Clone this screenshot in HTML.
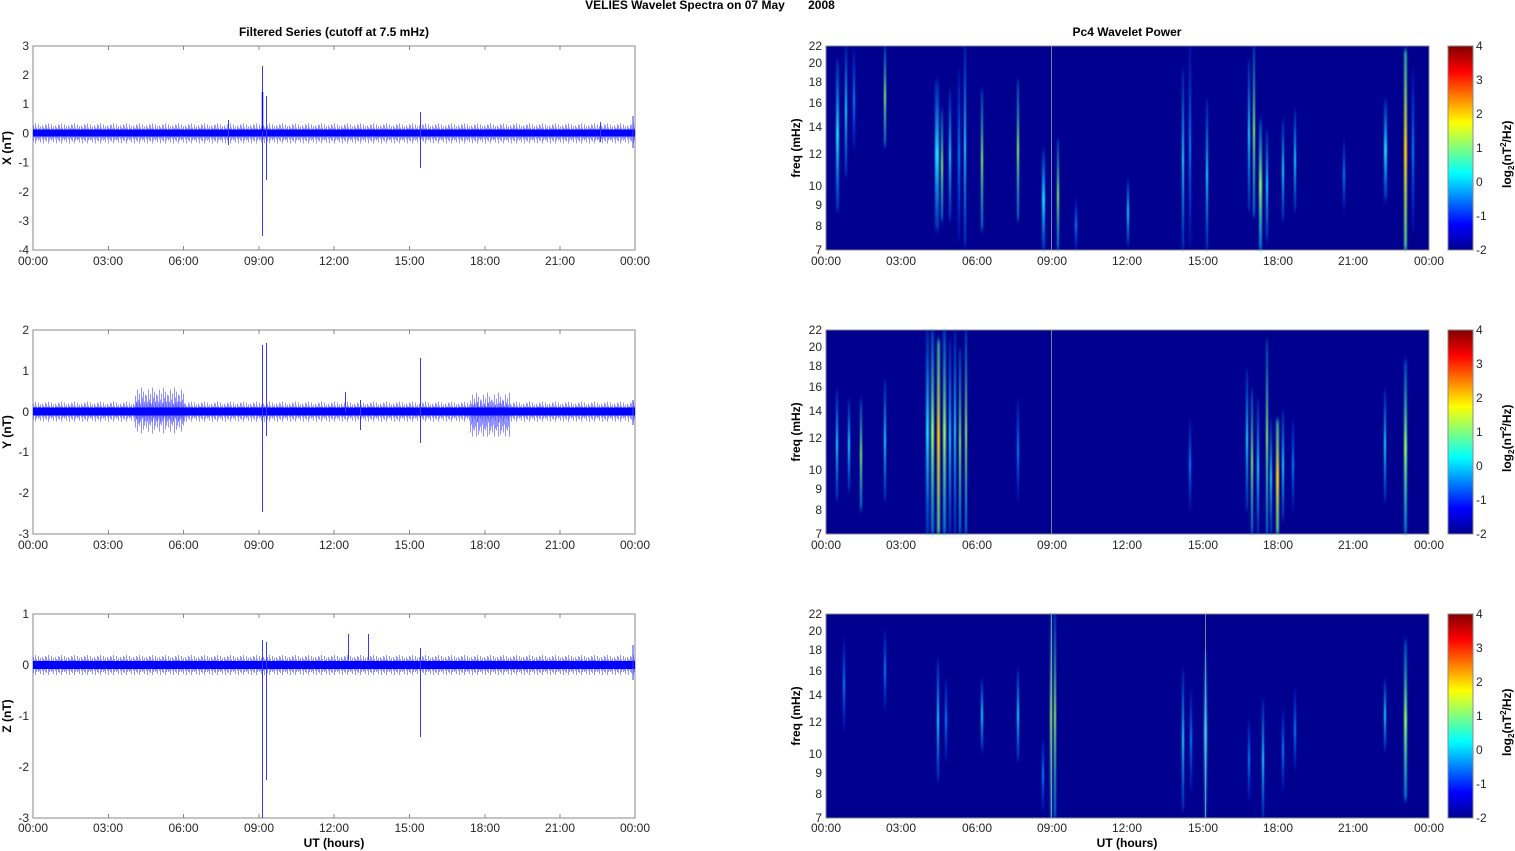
<!DOCTYPE html>
<html><head><meta charset="utf-8"><style>
html,body{margin:0;padding:0;background:#fff;}
svg{display:block;font-family:"Liberation Sans",Arial,sans-serif;}
.t{font-size:12px;fill:#262626;}
.b{font-size:12px;font-weight:bold;fill:#000;}
</style></head><body>
<svg width="1515" height="851" viewBox="0 0 1515 851" xmlns="http://www.w3.org/2000/svg">
<defs>
<pattern id="n" width="13" height="40" patternUnits="userSpaceOnUse">
<path d="M0.5 12V28M1.5 15V24M2.5 10V30M3.5 14V27M4.5 16V25M5.5 11V27M6.5 15V26M7.5 13V29M8.5 16V24M9.5 12V26M10.5 14V30M11.5 15V25M12.5 11V27" stroke="#4a4aff" stroke-width="1" opacity="0.6"/>
</pattern>
<pattern id="nw" width="11" height="60" patternUnits="userSpaceOnUse">
<path d="M0.5 14V46M1.5 20V38M2.5 8V50M3.5 18V42M4.5 12V44M5.5 22V40M6.5 6V52M7.5 16V36M8.5 10V48M9.5 20V44M10.5 13V40" stroke="#4a4aff" stroke-width="1" opacity="0.6"/>
</pattern>
<linearGradient id="jet" x1="0" y1="1" x2="0" y2="0">
<stop offset="0" stop-color="#00008f"/><stop offset="0.125" stop-color="#0000ff"/>
<stop offset="0.375" stop-color="#00ffff"/><stop offset="0.625" stop-color="#ffff00"/>
<stop offset="0.875" stop-color="#ff0000"/><stop offset="1" stop-color="#800000"/>
</linearGradient>
<linearGradient id="c" x1="0" y1="0" x2="0" y2="1"><stop offset="0" stop-color="#00a0ff" stop-opacity="0.2"/><stop offset="0.5" stop-color="#20e0ff"/><stop offset="1" stop-color="#00a0ff" stop-opacity="0.3"/></linearGradient>
<linearGradient id="g" x1="0" y1="0" x2="0" y2="1"><stop offset="0" stop-color="#00c0ff" stop-opacity="0.3"/><stop offset="0.5" stop-color="#90ff60"/><stop offset="1" stop-color="#00d0ff" stop-opacity="0.5"/></linearGradient>
<linearGradient id="y" x1="0" y1="0" x2="0" y2="1"><stop offset="0" stop-color="#40ffb0" stop-opacity="0.6"/><stop offset="0.5" stop-color="#ffd000"/><stop offset="1" stop-color="#60ff90" stop-opacity="0.7"/></linearGradient>
<linearGradient id="d" x1="0" y1="0" x2="0" y2="1"><stop offset="0" stop-color="#0050ff" stop-opacity="0.2"/><stop offset="0.5" stop-color="#0090ff"/><stop offset="1" stop-color="#0050ff" stop-opacity="0.2"/></linearGradient>
<filter id="bl" x="-2" y="0" width="5" height="1"><feGaussianBlur stdDeviation="0.7 3"/></filter>
</defs>

<text x="710" y="9" class="b" text-anchor="middle">VELIES Wavelet Spectra on 07 May&#160;&#160;&#160;&#160;&#160;&#160;&#160;2008</text>
<text x="334" y="36" class="b" text-anchor="middle">Filtered Series (cutoff at 7.5 mHz)</text>
<text x="1127" y="36" class="b" text-anchor="middle">Pc4 Wavelet Power</text>

<g>
<rect x="33" y="46" width="602" height="204" fill="#fff" stroke="#888"/>
<g transform="translate(33,113.4)"><rect width="602" height="40" fill="url(#n)"/></g>
<rect x="33" y="129.5" width="602" height="7" fill="#0000ff"/>
<path d="M262.5 66V236M266.5 96V180M420.5 112V168M228.5 120V145M633 116V148M600.5 122V142" stroke="#3838ff" stroke-width="1"/>
<path d="M262.5 92V132" stroke="#0000ff" stroke-width="1.5"/>
</g>
<g>
<rect x="33" y="330" width="602" height="204" fill="#fff" stroke="#888"/>
<g transform="translate(33,391.6)"><rect width="602" height="40" fill="url(#n)"/></g>
<g transform="translate(135,381.6)"><rect width="50" height="60" fill="url(#nw)"/></g>
<g transform="translate(470,386.6)"><rect width="40" height="50" fill="url(#nw)"/></g>
<rect x="33" y="407.5" width="602" height="8" fill="#0000ff"/>
<path d="M262.5 345V512M266.5 343V436M420.5 358V443M360.5 400V430M345.5 392V412M633 400V425" stroke="#3838ff" stroke-width="1"/>
</g>
<g>
<rect x="33" y="614" width="602" height="204" fill="#fff" stroke="#888"/>
<g transform="translate(33,645)"><rect width="602" height="40" fill="url(#n)"/></g>
<rect x="33" y="661" width="602" height="8" fill="#0000ff"/>
<path d="M262.5 640V818M266.5 642V780M420.5 648V737M348.5 634V660M368.5 634V660M633 645V680" stroke="#3838ff" stroke-width="1"/>
</g>

<g class="t" text-anchor="middle">
<text x="33" y="265">00:00</text><text x="108" y="265">03:00</text><text x="183.5" y="265">06:00</text><text x="259" y="265">09:00</text><text x="334" y="265">12:00</text><text x="409.5" y="265">15:00</text><text x="485" y="265">18:00</text><text x="560" y="265">21:00</text><text x="635" y="265">00:00</text>
<text x="33" y="549">00:00</text><text x="108" y="549">03:00</text><text x="183.5" y="549">06:00</text><text x="259" y="549">09:00</text><text x="334" y="549">12:00</text><text x="409.5" y="549">15:00</text><text x="485" y="549">18:00</text><text x="560" y="549">21:00</text><text x="635" y="549">00:00</text>
<text x="33" y="832">00:00</text><text x="108" y="832">03:00</text><text x="183.5" y="832">06:00</text><text x="259" y="832">09:00</text><text x="334" y="832">12:00</text><text x="409.5" y="832">15:00</text><text x="485" y="832">18:00</text><text x="560" y="832">21:00</text><text x="635" y="832">00:00</text>
</g>
<g class="t" text-anchor="end">
<text x="29" y="50">3</text><text x="29" y="79">2</text><text x="29" y="108">1</text><text x="29" y="137.5">0</text><text x="29" y="166.5">-1</text><text x="29" y="196">-2</text><text x="29" y="225">-3</text><text x="29" y="254">-4</text>
<text x="29" y="334">2</text><text x="29" y="375">1</text><text x="29" y="416">0</text><text x="29" y="456">-1</text><text x="29" y="497">-2</text><text x="29" y="538">-3</text>
<text x="29" y="618">1</text><text x="29" y="669">0</text><text x="29" y="720">-1</text><text x="29" y="771">-2</text><text x="29" y="822">-3</text>
</g>
<path d="M108.5 46v4M183.5 46v4M259 46v4M334 46v4M409.5 46v4M485 46v4M560 46v4M108.5 250v-4M183.5 250v-4M259 250v-4M334 250v-4M409.5 250v-4M485 250v-4M560 250v-4
M108.5 330v4M183.5 330v4M259 330v4M334 330v4M409.5 330v4M485 330v4M560 330v4M108.5 534v-4M183.5 534v-4M259 534v-4M334 534v-4M409.5 534v-4M485 534v-4M560 534v-4
M108.5 614v4M183.5 614v4M259 614v4M334 614v4M409.5 614v4M485 614v4M560 614v4M108.5 818v-4M183.5 818v-4M259 818v-4M334 818v-4M409.5 818v-4M485 818v-4M560 818v-4" stroke="#888"/>
<text class="b" transform="translate(11,148) rotate(-90)" text-anchor="middle">X (nT)</text>
<text class="b" transform="translate(11,432) rotate(-90)" text-anchor="middle">Y (nT)</text>
<text class="b" transform="translate(11,716) rotate(-90)" text-anchor="middle">Z (nT)</text>
<text class="b" x="334" y="847" text-anchor="middle">UT (hours)</text>

<rect x="826" y="46" width="603" height="204" fill="#00008f"/>
<rect x="826" y="330" width="603" height="204" fill="#00008f"/>
<rect x="826" y="614" width="603" height="204" fill="#00008f"/>

<g filter="url(#bl)">
<rect x="836" y="60" width="3" height="150" fill="url(#c)"/>
<rect x="845" y="46" width="2" height="130" fill="url(#c)"/>
<rect x="853" y="50" width="2" height="100" fill="url(#d)"/>
<rect x="884" y="46" width="2" height="100" fill="url(#g)"/>
<rect x="935" y="80" width="4" height="150" fill="url(#c)"/>
<rect x="941" y="110" width="2" height="110" fill="url(#g)"/>
<rect x="949" y="90" width="2" height="130" fill="url(#c)"/>
<rect x="958" y="70" width="2" height="170" fill="url(#d)"/>
<rect x="964" y="46" width="2" height="200" fill="url(#c)"/>
<rect x="981" y="90" width="2" height="140" fill="url(#g)"/>
<rect x="1017" y="80" width="2" height="140" fill="url(#g)"/>
<rect x="1042" y="150" width="3" height="100" fill="url(#c)"/>
<rect x="1057" y="140" width="2" height="110" fill="url(#g)"/>
<rect x="1075" y="200" width="2" height="50" fill="url(#d)"/>
<rect x="1127" y="180" width="2" height="65" fill="url(#c)"/>
<rect x="1182" y="70" width="2" height="180" fill="url(#c)"/>
<rect x="1189" y="46" width="2" height="200" fill="url(#d)"/>
<rect x="1206" y="100" width="2" height="150" fill="url(#c)"/>
<rect x="1248" y="60" width="2" height="150" fill="url(#c)"/>
<rect x="1253" y="46" width="2" height="170" fill="url(#g)"/>
<rect x="1259" y="120" width="3" height="130" fill="url(#g)"/>
<rect x="1266" y="130" width="2" height="110" fill="url(#c)"/>
<rect x="1282" y="120" width="2" height="100" fill="url(#c)"/>
<rect x="1294" y="110" width="2" height="100" fill="url(#c)"/>
<rect x="1343" y="140" width="2" height="70" fill="url(#d)"/>
<rect x="1384" y="100" width="3" height="100" fill="url(#c)"/>
<rect x="1404" y="50" width="3" height="200" fill="url(#y)"/>
<rect x="1412" y="70" width="2" height="160" fill="url(#d)"/>
<rect x="836" y="390" width="2" height="110" fill="url(#c)"/>
<rect x="848" y="400" width="2" height="90" fill="url(#c)"/>
<rect x="860" y="400" width="2" height="110" fill="url(#g)"/>
<rect x="884" y="380" width="2" height="120" fill="url(#c)"/>
<rect x="926" y="330" width="3" height="204" fill="url(#c)"/>
<rect x="931" y="330" width="3" height="204" fill="url(#g)"/>
<rect x="937" y="340" width="3" height="194" fill="url(#y)"/>
<rect x="943" y="330" width="3" height="204" fill="url(#g)"/>
<rect x="949" y="340" width="2" height="194" fill="url(#c)"/>
<rect x="954" y="330" width="2" height="204" fill="url(#c)"/>
<rect x="959" y="350" width="2" height="184" fill="url(#g)"/>
<rect x="965" y="330" width="2" height="204" fill="url(#g)"/>
<rect x="1017" y="400" width="2" height="100" fill="url(#d)"/>
<rect x="1189" y="420" width="2" height="90" fill="url(#d)"/>
<rect x="1246" y="370" width="2" height="140" fill="url(#c)"/>
<rect x="1251" y="390" width="2" height="144" fill="url(#g)"/>
<rect x="1257" y="400" width="2" height="134" fill="url(#c)"/>
<rect x="1266" y="340" width="2" height="194" fill="url(#g)"/>
<rect x="1270" y="420" width="2" height="114" fill="url(#c)"/>
<rect x="1276" y="420" width="3" height="114" fill="url(#y)"/>
<rect x="1282" y="410" width="2" height="110" fill="url(#c)"/>
<rect x="1292" y="420" width="2" height="90" fill="url(#d)"/>
<rect x="1384" y="390" width="2" height="110" fill="url(#c)"/>
<rect x="1404" y="360" width="3" height="174" fill="url(#g)"/>
<rect x="843" y="640" width="2" height="90" fill="url(#d)"/>
<rect x="884" y="630" width="2" height="80" fill="url(#d)"/>
<rect x="937" y="660" width="2" height="120" fill="url(#c)"/>
<rect x="945" y="680" width="2" height="80" fill="url(#d)"/>
<rect x="981" y="680" width="2" height="70" fill="url(#c)"/>
<rect x="1017" y="670" width="2" height="90" fill="url(#c)"/>
<rect x="1042" y="740" width="2" height="70" fill="url(#d)"/>
<rect x="1050" y="614" width="2" height="204" fill="url(#g)"/>
<rect x="1054" y="614" width="2" height="204" fill="url(#g)"/>
<rect x="1182" y="670" width="2" height="140" fill="url(#c)"/>
<rect x="1190" y="690" width="2" height="100" fill="url(#d)"/>
<rect x="1204" y="650" width="3" height="168" fill="url(#c)"/>
<rect x="1248" y="720" width="2" height="80" fill="url(#d)"/>
<rect x="1262" y="700" width="2" height="118" fill="url(#c)"/>
<rect x="1282" y="710" width="2" height="80" fill="url(#d)"/>
<rect x="1294" y="690" width="2" height="80" fill="url(#d)"/>
<rect x="1384" y="680" width="2" height="70" fill="url(#c)"/>
<rect x="1404" y="640" width="3" height="160" fill="url(#g)"/>
</g>
<path d="M1051.5 46V250M1051.5 330V534M1051.5 614V818M1205.5 614V818" stroke="#a0a0a0" stroke-width="1" opacity="0.8"/>

<rect x="826" y="46" width="603" height="204" fill="none" stroke="#888"/>
<rect x="826" y="330" width="603" height="204" fill="none" stroke="#888"/>
<rect x="826" y="614" width="603" height="204" fill="none" stroke="#888"/>

<g class="t" text-anchor="middle">
<text x="826" y="265">00:00</text><text x="901" y="265">03:00</text><text x="977" y="265">06:00</text><text x="1052" y="265">09:00</text><text x="1127" y="265">12:00</text><text x="1203" y="265">15:00</text><text x="1278" y="265">18:00</text><text x="1353" y="265">21:00</text><text x="1429" y="265">00:00</text>
<text x="826" y="549">00:00</text><text x="901" y="549">03:00</text><text x="977" y="549">06:00</text><text x="1052" y="549">09:00</text><text x="1127" y="549">12:00</text><text x="1203" y="549">15:00</text><text x="1278" y="549">18:00</text><text x="1353" y="549">21:00</text><text x="1429" y="549">00:00</text>
<text x="826" y="832">00:00</text><text x="901" y="832">03:00</text><text x="977" y="832">06:00</text><text x="1052" y="832">09:00</text><text x="1127" y="832">12:00</text><text x="1203" y="832">15:00</text><text x="1278" y="832">18:00</text><text x="1353" y="832">21:00</text><text x="1429" y="832">00:00</text>
</g>
<g class="t" text-anchor="end">
<text x="822" y="50">22</text><text x="822" y="67">20</text><text x="822" y="86">18</text><text x="822" y="107">16</text><text x="822" y="131">14</text><text x="822" y="158">12</text><text x="822" y="190">10</text><text x="822" y="209">9</text><text x="822" y="230">8</text><text x="822" y="254">7</text>
<text x="822" y="334">22</text><text x="822" y="351">20</text><text x="822" y="370">18</text><text x="822" y="391">16</text><text x="822" y="415">14</text><text x="822" y="442">12</text><text x="822" y="474">10</text><text x="822" y="493">9</text><text x="822" y="514">8</text><text x="822" y="538">7</text>
<text x="822" y="618">22</text><text x="822" y="635">20</text><text x="822" y="654">18</text><text x="822" y="675">16</text><text x="822" y="699">14</text><text x="822" y="726">12</text><text x="822" y="758">10</text><text x="822" y="777">9</text><text x="822" y="798">8</text><text x="822" y="822">7</text>
</g>
<text class="b" transform="translate(800,148) rotate(-90)" text-anchor="middle">freq (mHz)</text>
<text class="b" transform="translate(800,432) rotate(-90)" text-anchor="middle">freq (mHz)</text>
<text class="b" transform="translate(800,716) rotate(-90)" text-anchor="middle">freq (mHz)</text>
<text class="b" x="1127" y="847" text-anchor="middle">UT (hours)</text>

<rect x="1448" y="46" width="25" height="204" fill="url(#jet)" stroke="#888"/>
<rect x="1448" y="330" width="25" height="204" fill="url(#jet)" stroke="#888"/>
<rect x="1448" y="614" width="25" height="204" fill="url(#jet)" stroke="#888"/>
<g class="t">
<text x="1476" y="50">4</text><text x="1476" y="84">3</text><text x="1476" y="118">2</text><text x="1476" y="152">1</text><text x="1476" y="186">0</text><text x="1476" y="220">-1</text><text x="1476" y="254">-2</text>
<text x="1476" y="334">4</text><text x="1476" y="368">3</text><text x="1476" y="402">2</text><text x="1476" y="436">1</text><text x="1476" y="470">0</text><text x="1476" y="504">-1</text><text x="1476" y="538">-2</text>
<text x="1476" y="618">4</text><text x="1476" y="652">3</text><text x="1476" y="686">2</text><text x="1476" y="720">1</text><text x="1476" y="754">0</text><text x="1476" y="788">-1</text><text x="1476" y="822">-2</text>
</g>
<g class="b">
<text transform="translate(1511,188) rotate(-90)">log<tspan font-size="8" dy="3">2</tspan><tspan dy="-3">(nT</tspan><tspan font-size="8" dy="-5">2</tspan><tspan dy="5">/Hz)</tspan></text>
<text transform="translate(1511,472) rotate(-90)">log<tspan font-size="8" dy="3">2</tspan><tspan dy="-3">(nT</tspan><tspan font-size="8" dy="-5">2</tspan><tspan dy="5">/Hz)</tspan></text>
<text transform="translate(1511,756) rotate(-90)">log<tspan font-size="8" dy="3">2</tspan><tspan dy="-3">(nT</tspan><tspan font-size="8" dy="-5">2</tspan><tspan dy="5">/Hz)</tspan></text>
</g>
</svg>
</body></html>
